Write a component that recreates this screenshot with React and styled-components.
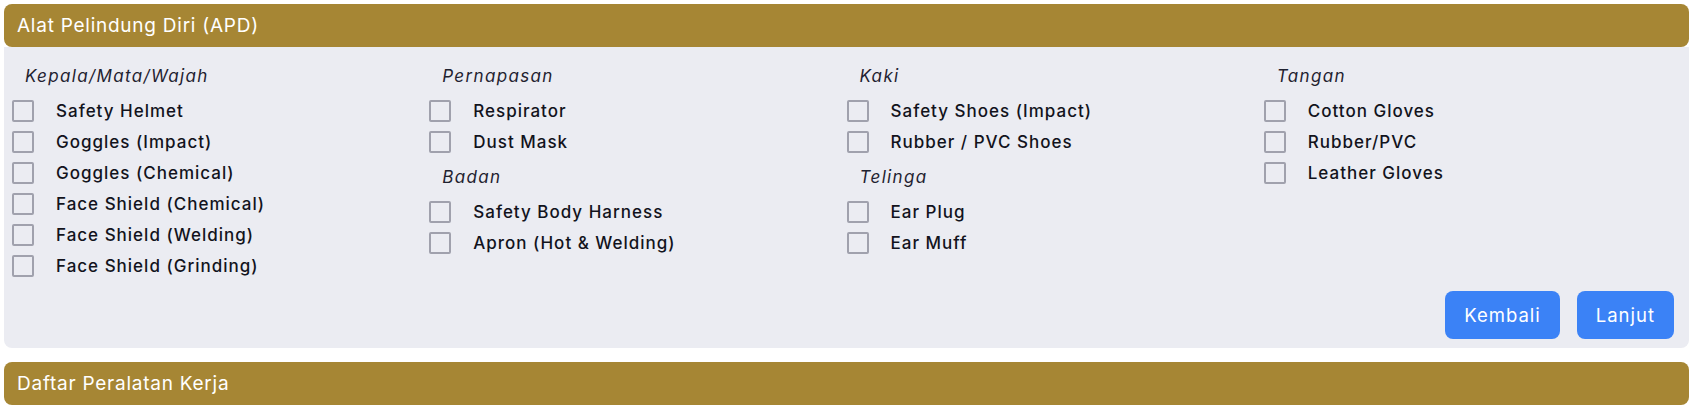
import React from "react";
import styled, { createGlobalStyle } from "styled-components";

const GlobalStyle = createGlobalStyle`
  body {
    margin: 0;
    padding: 4px;
    background: #ffffff;
    font-family: "Inter", "Noto Sans", sans-serif;
  }
`;

const columns = [
  [
    {
      title: "Kepala/Mata/Wajah",
      items: [
        "Safety Helmet",
        "Goggles (Impact)",
        "Goggles (Chemical)",
        "Face Shield (Chemical)",
        "Face Shield (Welding)",
        "Face Shield (Grinding)",
      ],
    },
  ],
  [
    { title: "Pernapasan", items: ["Respirator", "Dust Mask"] },
    { title: "Badan", items: ["Safety Body Harness", "Apron (Hot & Welding)"] },
  ],
  [
    { title: "Kaki", items: ["Safety Shoes (Impact)", "Rubber / PVC Shoes"] },
    { title: "Telinga", items: ["Ear Plug", "Ear Muff"] },
  ],
  [{ title: "Tangan", items: ["Cotton Gloves", "Rubber/PVC", "Leather Gloves"] }],
];

const App = () => {
  return (
    <>
      <GlobalStyle />
      <Section>
        <SectionHeader>Alat Pelindung Diri (APD)</SectionHeader>
        <Panel>
          <Grid>
            {columns.map((groups, ci) => (
              <Column key={ci}>
                {groups.map((g) => (
                  <Group key={g.title}>
                    <GroupTitle>{g.title}</GroupTitle>
                    <Items>
                      {g.items.map((item) => (
                        <Item key={item}>
                          <Box type="checkbox" />
                          <span>{item}</span>
                        </Item>
                      ))}
                    </Items>
                  </Group>
                ))}
              </Column>
            ))}
          </Grid>
          <Actions>
            <Button>Kembali</Button>
            <Button>Lanjut</Button>
          </Actions>
        </Panel>
      </Section>
      <SectionHeader>Daftar Peralatan Kerja</SectionHeader>
    </>
  );
};

export default App;

// Styled Components
const Section = styled.div`
  margin-bottom: 14px;
`;

const SectionHeader = styled.div`
  background: #a68634;
  color: #ffffff;
  height: 43px;
  display: flex;
  align-items: center;
  padding: 0 13px;
  border-radius: 8px;
  font-size: 19px;
  letter-spacing: 0.75px;
  font-weight: 400;
`;

const Panel = styled.div`
  background: #ebecf2;
  border-radius: 0 0 8px 8px;
  padding: 17px 8px 9px 8px;
`;

const Grid = styled.div`
  display: grid;
  grid-template-columns: repeat(4, 1fr);
`;

const Column = styled.div`
  display: flex;
  flex-direction: column;
  gap: 12px;
`;

const Group = styled.div`
  display: flex;
  flex-direction: column;
`;

const GroupTitle = styled.div`
  font-style: italic;
  font-size: 17px;
  letter-spacing: 1.35px;
  line-height: 24px;
  color: #1f2230;
  padding-left: 13px;
  margin-bottom: 12px;
`;

const Items = styled.div`
  display: flex;
  flex-direction: column;
  gap: 9px;
`;

const Item = styled.label`
  display: flex;
  align-items: center;
  gap: 22px;
  height: 22px;
  font-size: 17px;
  letter-spacing: 1px;
  font-weight: 500;
  color: #12131c;
`;

const Box = styled.input`
  appearance: none;
  margin: 0;
  width: 22px;
  height: 22px;
  border: 2px solid #a0a1ad;
  border-radius: 2px;
  background: transparent;
  flex-shrink: 0;
`;

const Actions = styled.div`
  display: flex;
  justify-content: flex-end;
  gap: 17px;
  margin-top: 14px;
  padding-right: 7px;
`;

const Button = styled.button`
  background: #3b82f6;
  color: #ffffff;
  border: none;
  border-radius: 8px;
  height: 48px;
  padding: 0 19px;
  font-family: inherit;
  font-size: 18.5px;
  letter-spacing: 1px;
  cursor: pointer;
`;
